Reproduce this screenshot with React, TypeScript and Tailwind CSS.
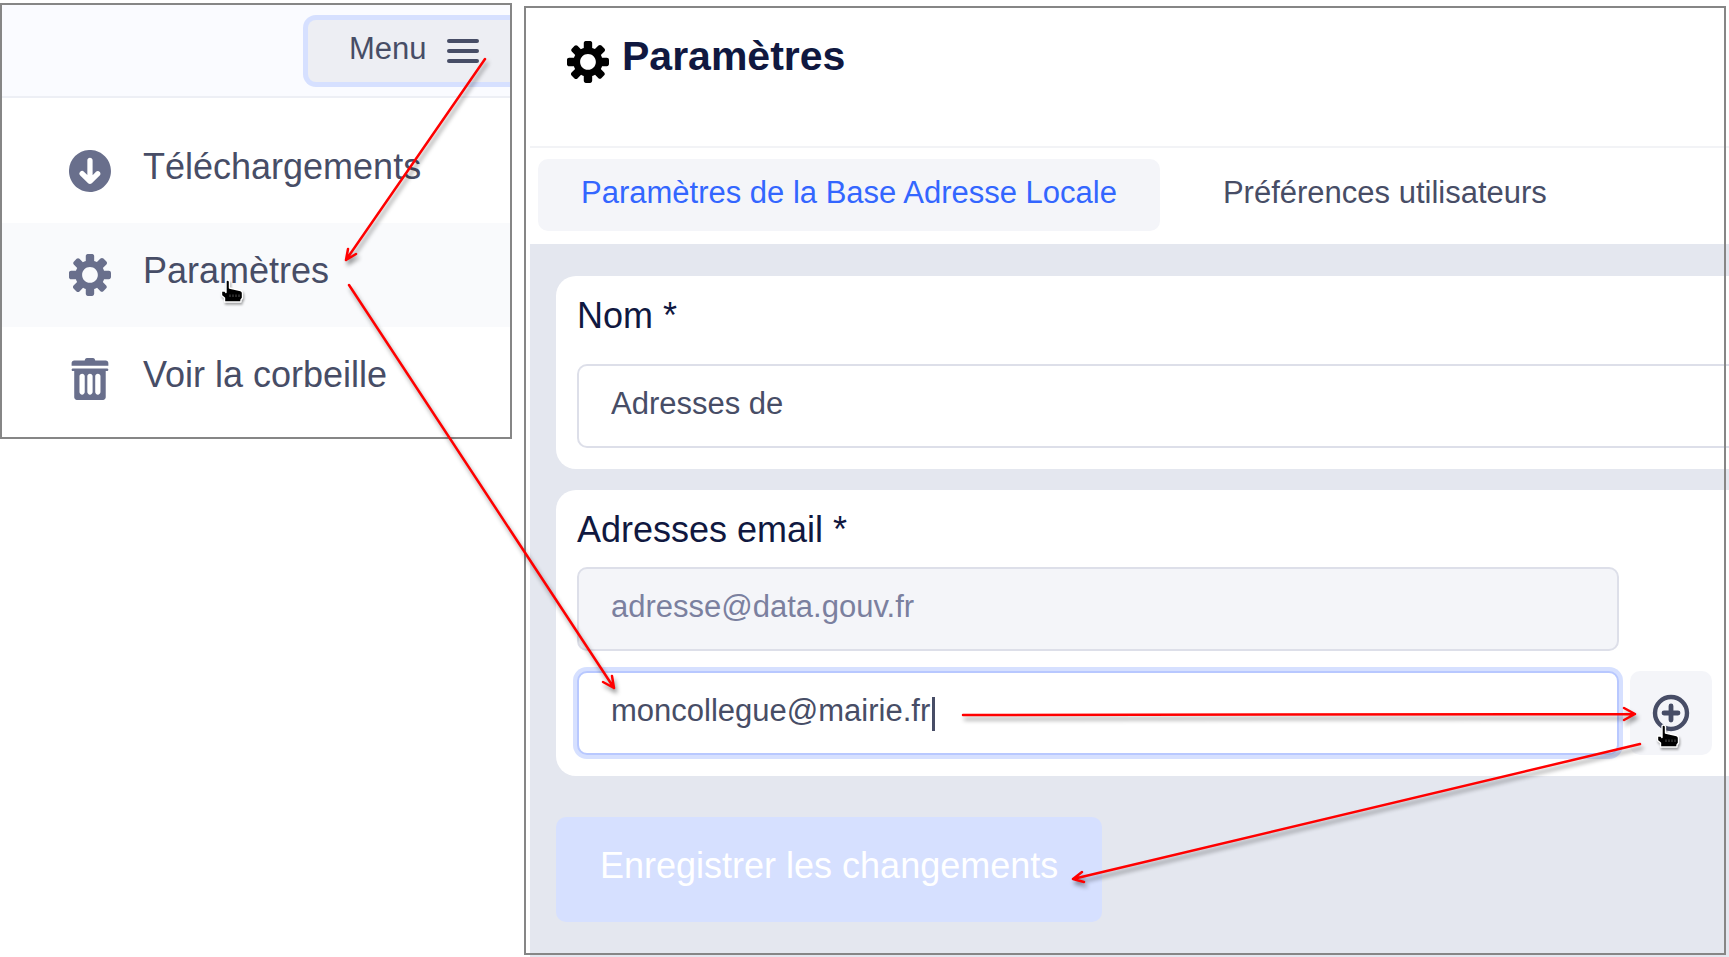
import React from "react";

const COG =
  "M15.19 6.39h-1.85c-.11-.37-.27-.71-.45-1.04l1.36-1.36c.31-.31.31-.82 0-1.13l-1.13-1.13c-.31-.31-.82-.31-1.13 0l-1.36 1.36c-.33-.17-.67-.33-1.04-.44V.79c0-.44-.36-.8-.8-.8h-1.6c-.44 0-.8.36-.8.8v1.86c-.39.12-.75.28-1.1.47l-1.3-1.3c-.3-.3-.79-.3-1.09 0L1.82 2.91c-.3.3-.3.79 0 1.09l1.3 1.3c-.2.34-.36.7-.48 1.09H.79c-.44 0-.8.36-.8.8v1.6c0 .44.36.8.8.8h1.85c.11.37.27.71.45 1.04l-1.36 1.36c-.31.31-.31.82 0 1.13l1.13 1.13c.31.31.82.31 1.13 0l1.36-1.36c.33.18.67.33 1.04.44v1.86c0 .44.36.8.8.8h1.6c.44 0 .8-.36.8-.8v-1.86c.39-.12.75-.28 1.1-.47l1.3 1.3c.3.3.79.3 1.09 0l1.09-1.09c.3-.3.3-.79 0-1.09l-1.3-1.3c.19-.35.36-.71.48-1.1h1.85c.44 0 .8-.36.8-.8v-1.6a.816.816 0 00-.81-.79zm-7.2 4.6c-1.66 0-3-1.34-3-3s1.34-3 3-3 3 1.34 3 3-1.34 3-3 3z";
const TRASH =
  "M14.49 3.99h-13c-.28 0-.5.22-.5.5s.22.5.5.5h.5v10c0 .55.45 1 1 1h10c.55 0 1-.45 1-1v-10h.5c.28 0 .5-.22.5-.5s-.22-.5-.5-.5zm-8.5 9c0 .55-.45 1-1 1s-1-.45-1-1v-6c0-.55.45-1 1-1s1 .45 1 1v6zm3 0c0 .55-.45 1-1 1s-1-.45-1-1v-6c0-.55.45-1 1-1s1 .45 1 1v6zm3 0c0 .55-.45 1-1 1s-1-.45-1-1v-6c0-.55.45-1 1-1s1 .45 1 1v6zm2-12h-4c0-.55-.45-1-1-1h-2c-.55 0-1 .45-1 1h-4c-.55 0-1 .45-1 1v1h14v-1c0-.55-.45-1-1-1z";
const DOWNLOAD =
  "M7.99-.01c-4.42 0-8 3.58-8 8s3.58 8 8 8 8-3.58 8-8-3.58-8-8-8zM11.7 9.7l-3 3c-.18.18-.43.29-.71.29s-.53-.11-.71-.29l-3-3A1.003 1.003 0 015.7 8.28l1.29 1.29V3.99c0-.55.45-1 1-1s1 .45 1 1v5.59l1.29-1.29a1.003 1.003 0 011.71.71c0 .27-.11.52-.29.7z";

function Icon({ path, className }: { path: string; className: string }) {
  return (
    <svg viewBox="0 0 16 16" aria-hidden="true" className={"size-[42px] shrink-0 fill-current " + className}>
      <path fillRule="evenodd" d={path} />
    </svg>
  );
}

function MenuItem({ path, label, active = false }: { path: string; label: string; active?: boolean }) {
  return (
    <button
      type="button"
      className={"flex h-[104px] w-full items-center gap-8 pl-[67px] text-left " + (active ? "bg-[#f9fafc]" : "bg-white")}
    >
      <Icon path={path} className="text-[#696f8c]" />
      <span className="pb-2 text-[36px] leading-10 text-[#474d66]">{label}</span>
    </button>
  );
}

const ARROWS = [
  "M485 59L346 260M348 249L346 260L356 254",
  "M349 285L614 688M612 676L614 688L603 682",
  "M963 715L1635 714M1624 708L1635 714L1624 720",
  "M1640 744L1073 879M1082 872L1073 879L1084 882",
];

function Hand({ x, y }: { x: number; y: number }) {
  return (
    <g transform={`translate(${x} ${y})`}>
      <path
        d="M5 1.5Q5 0 6.500 0T8.500 1.500V8l11 2.500q2 .5 2 2.500v5l-1.500 2v2H3.500v-4L.5 15.500V11H4l1 1.500z"
        fill="#000"
        stroke="#fff"
        strokeWidth="1.4"
        strokeLinejoin="round"
      />
      <path d="M9 14.500v2.500M12 14.500v2.500M15 14.500v2.500M18 14.500v2.500" stroke="#555" strokeWidth="1" />
    </g>
  );
}

function Annotations() {
  return (
    <svg
      aria-hidden="true"
      width="1729"
      height="957"
      viewBox="0 0 1729 957"
      fill="none"
      className="pointer-events-none absolute top-0 left-0"
    >
      <g className="drop-shadow-[1px_2px_1px_rgba(0,0,0,0.35)]">
        <Hand x={221} y={280} />
        <Hand x={1657} y={725} />
      </g>
      <g
        stroke="#ff0000"
        strokeWidth="2.5"
        strokeLinecap="round"
        strokeLinejoin="round"
        className="drop-shadow-[2px_4px_2px_rgba(0,0,0,0.4)]"
      >
        {ARROWS.map((d) => (
          <path key={d} d={d} />
        ))}
      </g>
    </svg>
  );
}

const label = "block text-[36px] leading-10 text-[#101840]";
const field = "h-[84px] w-full min-w-0 border-2 px-8 pb-1 text-[31px] outline-none ";

export default function App() {
  return (
    <div className="relative flex min-h-screen w-full items-start overflow-hidden bg-white font-['Liberation_Sans',Arial,sans-serif]">
      <aside className="mt-[3px] mr-3 w-[512px] shrink-0 overflow-hidden border-2 border-[#868686] bg-white">
        <header className="flex h-[93px] items-center justify-end border-b-2 border-[#edeff5] bg-[#fafbff]">
          <button
            type="button"
            className="flex h-[62px] w-[202px] items-center gap-5 rounded-l-lg bg-[#edeef3] pl-[41px] text-[31px] text-[#474d66] ring-[5px] ring-[#d6e0ff]"
          >
            <span className="pb-1 leading-9">Menu</span>
            <svg viewBox="0 0 32 24" aria-hidden="true" className="h-6 w-8 fill-current">
              <rect y="0" width="32" height="4" rx="2" />
              <rect y="10" width="32" height="4" rx="2" />
              <rect y="20" width="32" height="4" rx="2" />
            </svg>
          </button>
        </header>
        <nav className="pt-[21px] pb-[6px]">
          <MenuItem path={DOWNLOAD} label="Téléchargements" />
          <MenuItem path={COG} label="Paramètres" active />
          <MenuItem path={TRASH} label="Voir la corbeille" />
        </nav>
      </aside>

      <main className="relative flex min-h-screen min-w-0 flex-1 flex-col pl-[6px]">
        <header className="flex h-[148px] items-center gap-[13px] border-b-2 border-[#f2f3f6] pb-[22px] pl-[37px]">
          <Icon path={COG} className="text-black" />
          <h1 className="pb-3 text-[41px] leading-[48px] font-bold text-[#101840]">Paramètres</h1>
        </header>

        <div role="tablist" className="flex gap-5 pt-[11px] pb-[13px] pl-2 text-[31px] whitespace-nowrap">
          <button
            type="button"
            role="tab"
            aria-selected="true"
            className="h-[72px] rounded-[10px] bg-[#f4f5f9] px-[43px] pb-1 text-[#3366ff]"
          >
            Paramètres de la Base Adresse Locale
          </button>
          <button type="button" role="tab" aria-selected="false" className="h-[72px] px-[43px] pb-1 text-[#474d66]">
            Préférences utilisateurs
          </button>
        </div>

        <form className="flex flex-1 flex-col items-start bg-[#e4e7ef] pt-8 pl-[26px]">
          <div className="w-full rounded-l-[20px] bg-white pt-5 pb-[21px] pl-[21px]">
            <label htmlFor="nom" className={label}>
              Nom *
            </label>
            <input
              id="nom"
              defaultValue="Adresses de"
              className={field + "mt-7 block rounded-l-[10px] border-r-0 border-[#dddfe9] bg-white text-[#474d66]"}
            />
          </div>

          <div className="mt-[21px] w-full rounded-l-[20px] bg-white pt-5 pr-[17px] pb-[21px] pl-[21px]">
            <label htmlFor="email" className={label}>
              Adresses email *
            </label>
            <div className="mt-[17px] grid grid-cols-[1fr_82px] gap-x-[11px] gap-y-5">
              <input
                aria-label="Adresse existante"
                disabled
                defaultValue="adresse@data.gouv.fr"
                className={field + "col-start-1 rounded-[10px] border-[#dddfe9] bg-[#f4f5f9] text-[#7b809f]"}
              />
              <div className="relative col-start-1">
                <input
                  id="email"
                  type="email"
                  defaultValue="moncollegue@mairie.fr"
                  className={field + "block rounded-[10px] border-[#b8c8ff] bg-white text-[#474d66] ring-4 ring-[#d6e0ff]"}
                />
                <span className="absolute top-[26px] left-[355px] h-[34px] w-[3px] bg-[#474d66]" />
              </div>
              <button
                type="button"
                aria-label="Ajouter"
                className="flex items-center justify-center rounded-[10px] bg-[#f4f5f9] text-[#474d66]"
              >
                <svg viewBox="0 0 38 38" aria-hidden="true" className="size-[38px] fill-none stroke-current">
                  <circle cx="19" cy="19" r="16" strokeWidth="4.4" />
                  <path d="M19 12v14M12 19h14" strokeWidth="4.8" strokeLinecap="round" />
                </svg>
              </button>
            </div>
          </div>

          <button
            type="button"
            disabled
            className="mt-[41px] h-[105px] rounded-[10px] bg-[#d6e0ff] px-11 pb-2 text-[36px] whitespace-nowrap text-white"
          >
            Enregistrer les changements
          </button>
        </form>

        <div className="pointer-events-none absolute top-[6px] right-[3px] bottom-[2px] left-0 border-2 border-[#868686]" />
      </main>

      <Annotations />
    </div>
  );
}
